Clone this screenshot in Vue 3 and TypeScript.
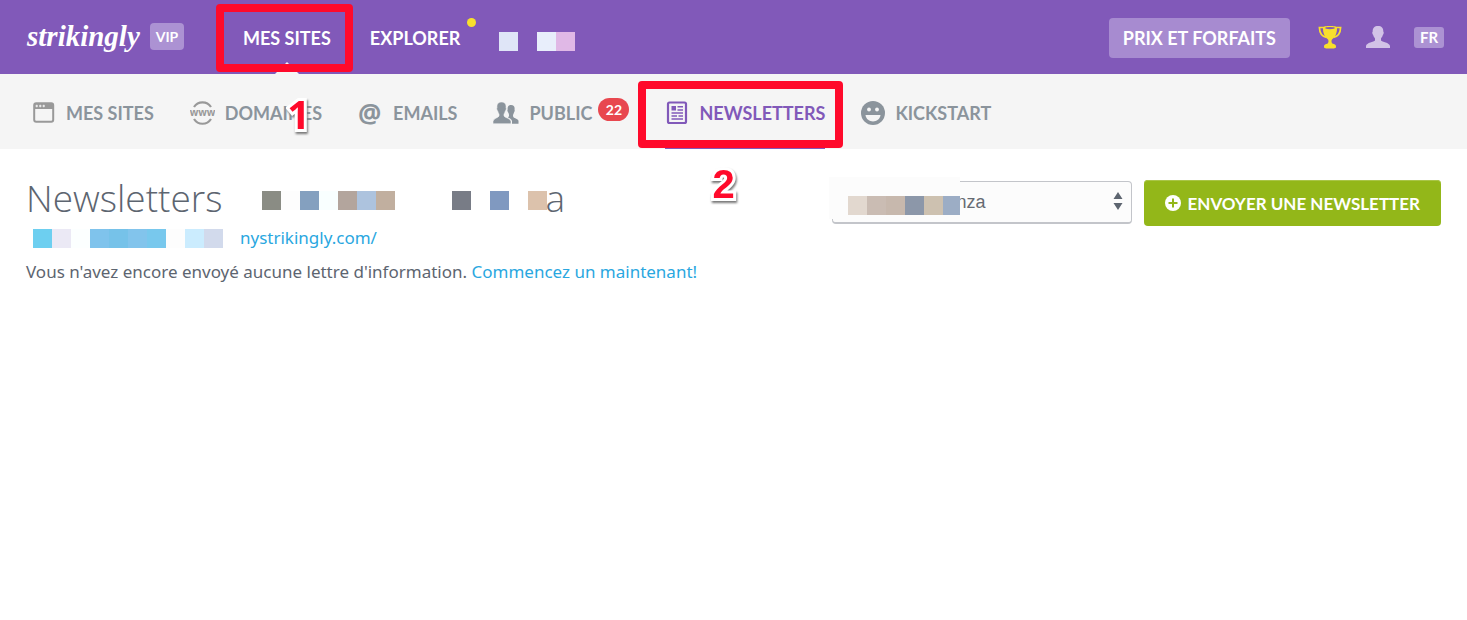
<script setup lang="ts">
import { ref } from 'vue'

interface Tab {
  id: string
  label: string
  badge?: number
  active?: boolean
  step?: number
}

const tabs: Tab[] = [
  { id: 'sites', label: 'MES SITES' },
  { id: 'domains', label: 'DOMAINES', step: 1 },
  { id: 'emails', label: 'EMAILS' },
  { id: 'audience', label: 'PUBLIC', badge: 22 },
  { id: 'newsletters', label: 'NEWSLETTERS', active: true, step: 2 },
  { id: 'kickstart', label: 'KICKSTART' },
]

const navCells = ['#dfe5f7', '', '#e8eefb', '#e0b8e6']
const titleCells = [
  '#8a8c84', '#fdfdfd', '#84a0bf', '#f9ffff', '#b3a59d', '#adc3de', '#c1af9f',
  '', '', '', '#787c86', '', '#8099c0', '', '#dcc2ac',
]
const urlCells = [
  '#6dcff0', '#ebe9f5', '#fcffff', '#7fc3ec', '#76c2e9',
  '#82c4ec', '#78c8ed', '#fdfdfd', '#cbecfe', '#d2daec',
]
const siteCells = ['#e2d8cf', '#cabcb3', '#c7b8ad', '#8c97a9', '#cdc1b0', '#9cadc5']

const site = ref('nza')
</script>

<template>
  <div class="page">
    <header class="topbar">
      <a class="logo" href="#">strikingly</a>
      <span class="vip">VIP</span>
      <nav class="main-nav" aria-label="Principal">
        <a class="main-link current" href="#">MES SITES<span class="frame frame-main"></span></a>
        <a class="main-link" href="#">EXPLORER<span class="dot"></span></a>
        <span class="cells"><i v-for="(c, i) in navCells" :key="i" class="cell" :style="{ background: c }"></i></span>
      </nav>
      <div class="account">
        <a class="pricing" href="#">PRIX ET FORFAITS</a>
        <button class="icon-btn" type="button" aria-label="Récompenses">
          <svg width="24" height="24" viewBox="0 0 24 24">
            <path d="M5.5 2.5H1.4C1.6 8 4 11.600 8.500 12.300M18.500 2.500H22.600C22.400 8 20 11.600 15.500 12.300" fill="none" stroke="#f8e02c" stroke-width="1.700" />
            <path d="M5 2.300C5 .4 19 .4 19 2.300C19.200 7.500 17.800 11.500 14 14.500C13.300 15.400 13.300 17.500 14.300 18.600C16.500 19 18 20 18 21.400V22.400C17 24 7 24 6 22.400V21.400C6 20 7.500 19 9.700 18.600C10.700 17.500 10.700 15.400 10 14.500C6.200 11.500 4.800 7.500 5 2.300Z" fill="#f8e02c" />
            <ellipse cx="12" cy="3.100" rx="4.800" ry="1.100" fill="#8159b9" />
          </svg>
        </button>
        <button class="icon-btn" type="button" aria-label="Compte">
          <svg width="24" height="22" viewBox="0 0 24 22">
            <path d="M12 0C15.500 0 17.500 2 17.300 5.500C18.200 6 17.600 8.500 16.800 9C16.500 10.800 15.500 11.700 15 12.500V14.500C16 16 23.500 16.500 24 20V22H0V20C.5 16.500 8 16 9 14.500V12.500C8.500 11.700 7.500 10.800 7.200 9C6.400 8.500 5.800 6 6.700 5.500C6.500 2 8.500 0 12 0Z" fill="#d2c3e7" />
          </svg>
        </button>
        <button class="lang" type="button">FR</button>
      </div>
    </header>

    <nav class="subnav" aria-label="Tableau de bord">
      <a v-for="t in tabs" :key="t.id" class="tab" :class="[t.id, { active: t.active }]" href="#">
        <svg v-if="t.id === 'sites'" class="tab-icon" width="24" height="24" viewBox="-1 -1 24 24">
          <rect x="1.200" y="1.200" width="19" height="18.600" rx="2" fill="#f5f5f5" stroke="#999" stroke-width="2" />
          <path d="M1 2H20.500V7H1Z" fill="#999" />
          <path d="M2.500 4H5M3.750 2.750V5.250M6 4H8.500M7.250 2.750V5.250M9.500 4H12M10.750 2.750V5.250" stroke="#f5f5f5" />
        </svg>
        <svg v-else-if="t.id === 'domains'" class="tab-icon" width="25" height="24" viewBox="0 0 25 24" aria-hidden="true">
          <path d="M4 6C8 -.3 17 -.3 21 6M4 18C8 24.300 17 24.300 21 18" fill="none" stroke="#999" stroke-width="2.200" />
          <text x="12.500" y="14.500" class="www">www</text>
        </svg>
        <span v-else-if="t.id === 'emails'" class="tab-icon at" aria-hidden="true">@</span>
        <svg v-else-if="t.id === 'audience'" class="tab-icon" width="26" height="24" viewBox="0 0 26 24">
          <path d="M18 4C21 4 22 6 21.500 8.500C22 9 21.500 11 21 11.500C20.500 13 20 13.500 20 15C20.500 18 25 17 25.500 20V22.800H19V20C18.500 18 16.500 17 15 16.500C16 15.500 16.500 14.500 15.500 12C14.500 11 14 9 14.700 8.500C14.300 6 15.500 4 18 4Z" fill="#8b949c" />
          <path d="M8.500 1C11.700 1 13.500 3 13 6.500C13.700 7.200 13 9.500 12.300 10C12 11.500 11.500 12.300 11 13V15C12 17 17.500 17 18 20.500V22.800H0V20.500C.5 17 5 17 6 15V13C5.500 12.300 5 11.500 4.700 10C4 9.500 3.300 7.200 4 6.500C3.500 3 5.300 1 8.500 1Z" fill="#8b949c" stroke="#f5f5f5" stroke-width=".6" />
        </svg>
        <svg v-else-if="t.id === 'newsletters'" class="tab-icon" width="24" height="24" viewBox="0 0 24 24">
          <rect x="3" y="1.500" width="18" height="20.500" rx="1.500" fill="none" stroke="#8159b9" stroke-width="2.200" />
          <path d="M6.500 5H11V9.500H6.500Z" fill="#8159b9" />
          <path d="M12.500 5.800H18M12.500 9H18M6.500 12H18M6.500 15H12M13.500 15H18M6.500 18H18" stroke="#8159b9" stroke-width="1.500" />
        </svg>
        <svg v-else class="tab-icon" width="24" height="24" viewBox="0 0 24 24">
          <circle cx="12" cy="12" r="12" fill="#8b949c" />
          <circle cx="8" cy="8.500" r="1.900" fill="#f5f5f5" />
          <circle cx="16" cy="8.500" r="1.900" fill="#f5f5f5" />
          <path d="M4.500 14H19.500C18.500 22.500 5.500 22.500 4.500 14Z" fill="#f5f5f5" />
        </svg>
        <span class="tab-label">{{ t.label }}</span>
        <span v-if="t.badge" class="badge">{{ t.badge }}</span>
        <span v-if="t.active" class="frame frame-tab"></span>
        <span v-if="t.step" class="step">{{ t.step }}</span>
      </a>
    </nav>

    <main class="content">
      <div class="intro">
        <h1 class="title">
          <span>Newsletters</span>
          <span class="cells"><i v-for="(c, i) in titleCells" :key="i" class="cell" :style="{ background: c }"></i></span>
          <span>a</span>
        </h1>
        <a class="url" href="#">
          <span class="cells"><i v-for="(c, i) in urlCells" :key="i" class="cell" :style="{ background: c }"></i></span>
          <span>nystrikingly.com/</span>
        </a>
        <p class="empty">Vous n'avez encore envoyé aucune lettre d'information. <a href="#">Commencez un maintenant!</a></p>
      </div>
      <div class="actions">
        <div class="picker">
          <select v-model="site" class="site-select" aria-label="Site">
            <option value="nza">nza</option>
          </select>
          <svg class="arrows" width="10" height="20" viewBox="0 0 10 20"><path d="M5 1L9.500 8H.5ZM5 19L9.500 12H.5Z" fill="#5d6570" /></svg>
          <span class="mask"><span class="cells"><i v-for="(c, i) in siteCells" :key="i" class="cell" :style="{ background: c }"></i></span></span>
        </div>
        <button class="send" type="button">
          <svg width="16" height="16" viewBox="0 0 16 16"><circle cx="8" cy="8" r="8" fill="#fff" /><path d="M8 3.500V12.500M3.500 8H12.500" stroke="#93b719" stroke-width="2" /></svg>
          <span>ENVOYER UNE NEWSLETTER</span>
        </button>
      </div>
    </main>
  </div>
</template>

<style>
body {
  margin: 0;
  background: #fff;
}
</style>

<style scoped>
.page {
  font-family: "Noto Sans", "Open Sans", sans-serif;
  font-size: 17px;
  color: #5d6570;
}
a {
  color: #2aa7df;
  text-decoration: none;
}
button {
  border: 0;
  padding: 0;
  background: none;
  cursor: pointer;
}
.topbar,
.subnav,
.send {
  font-family: Lato, sans-serif;
  font-size: 18px;
  font-weight: 700;
  white-space: nowrap;
}
.cells {
  display: flex;
}
.cell {
  flex: none;
  width: 19px;
  height: 19px;
}
.topbar {
  display: flex;
  align-items: center;
  height: 74px;
  padding: 0 23px 0 27px;
  background: #8159b9;
}
.logo {
  margin-bottom: 2px;
  width: 113px;
  font-family: "Liberation Serif", serif;
  font-size: 29px;
  font-style: italic;
  font-weight: 700;
  color: #fff;
}
.vip {
  margin-bottom: 2px;
  margin-left: 10px;
  width: 34px;
  border-radius: 4px;
  background: #ac92d3;
  color: #fff;
  font-size: 14px;
  line-height: 27px;
  text-align: center;
}
.main-nav {
  display: flex;
  align-items: center;
  height: 100%;
  margin-left: 59px;
}
.main-link {
  position: relative;
  box-sizing: border-box;
  height: 74px;
  margin-right: 39px;
  line-height: 76px;
  color: #fff;
}
.main-nav .cells {
  padding-top: 9px;
}
.current::after {
  content: "";
  position: absolute;
  left: 50%;
  bottom: 0;
  margin-left: -12px;
  border: 12px solid transparent;
  border-top: 0;
  border-bottom-color: #f5f5f5;
}
.frame {
  position: absolute;
  z-index: 1;
  box-sizing: border-box;
  border: 8px solid #ff0a2b;
  border-radius: 4px;
}
.frame-main {
  inset: 4px -22px 2px -27px;
}
.frame-tab {
  inset: 7px -18px 1px -27px;
}
.dot {
  position: absolute;
  top: 18px;
  right: -16px;
  width: 9px;
  height: 9px;
  border-radius: 50%;
  background: #f8e02c;
}
.account {
  display: flex;
  align-items: center;
  margin-left: auto;
}
.pricing {
  margin: 2px 28px 0 0;
  padding: 0 14px;
  border-radius: 4px;
  background: #a78bd0;
  color: #fff;
  line-height: 40px;
}
.icon-btn {
  display: flex;
  margin-right: 24px;
}
.lang {
  width: 30px;
  border-radius: 3px;
  background: #ac92d3;
  color: #fff;
  font: 700 15px/21px Lato, sans-serif;
}
.subnav {
  display: flex;
  gap: 36px;
  height: 75px;
  padding-left: 32px;
  background: #f5f5f5;
}
.tab {
  position: relative;
  display: flex;
  align-items: center;
  padding-top: 2px;
  color: #8b949c;
}
.tab-icon {
  margin-right: 10px;
}
.www {
  fill: #999;
  font: 700 10px "Open Sans", sans-serif;
  text-anchor: middle;
}
.at {
  width: 25px;
  font: 700 26px/26px "Open Sans", sans-serif;
}
.badge {
  margin: 0 0 6px 6px;
  width: 31px;
  border-radius: 12px;
  background: #e8474f;
  color: #fff;
  font-size: 14px;
  line-height: 23px;
  text-align: center;
}
.active {
  color: #8159b9;
}
.active::after {
  content: "";
  position: absolute;
  inset: auto 0 0;
  height: 2px;
  background: #8159b9;
}
.step {
  position: absolute;
  z-index: 2;
  font: 700 40px/40px "Liberation Sans", sans-serif;
  color: #ff0a2b;
  -webkit-text-stroke: 6px #fff;
  paint-order: stroke fill;
  filter: drop-shadow(1px 2px 1px #777);
}
.domains .step {
  right: 12px;
  top: 20px;
  font-family: "Open Sans", sans-serif;
}
.newsletters .step {
  left: 47px;
  top: 90px;
}
.content {
  display: flex;
  justify-content: space-between;
  align-items: flex-start;
  padding: 22px 26px;
}
.title {
  display: flex;
  align-items: center;
  margin: 0;
  font-family: "Open Sans", sans-serif;
  font-size: 37px;
  font-weight: 300;
  line-height: 54px;
}
.title .cells {
  margin: 5px -2px 0 40px;
}
.url {
  display: flex;
  align-items: center;
  gap: 17px;
  padding-left: 7px;
  line-height: 26px;
}
.empty {
  margin: 8px 0 0;
  line-height: 26px;
}
.actions {
  display: flex;
  gap: 12px;
  padding-top: 9px;
}
.picker {
  position: relative;
  width: 300px;
}
.site-select {
  appearance: none;
  width: 100%;
  height: 43px;
  margin-top: 1px;
  padding: 0 24px 0 124px;
  border: 1px solid #c3c5ca;
  border-bottom-width: 2px;
  border-radius: 4px;
  background: #fcfcfc;
  color: #666b73;
  font: 18px "Liberation Sans", sans-serif;
}
.arrows {
  position: absolute;
  top: 11px;
  right: 9px;
}
.mask {
  position: absolute;
  left: -3px;
  top: -3px;
  width: 131px;
  height: 42px;
  overflow: hidden;
  background: #fcfcfc;
}
.mask .cells {
  padding: 19px 0 0 19px;
}
.send {
  display: flex;
  align-items: center;
  justify-content: center;
  gap: 7px;
  height: 46px;
  padding: 0 21px;
  border-radius: 4px;
  background: #93b719;
  box-shadow: inset 0 1px 0 #a9c547;
  color: #fff;
  font-size: 17px;
}
</style>
